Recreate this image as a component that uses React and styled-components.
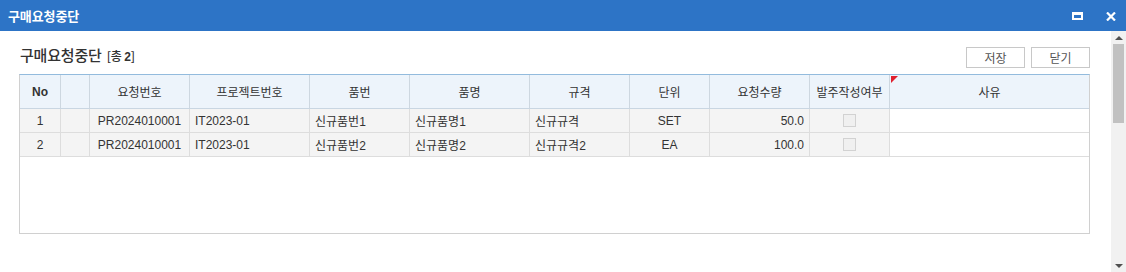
import React from 'react'
import styled, { createGlobalStyle } from 'styled-components';

const GlobalStyle = createGlobalStyle`
    html, body { margin: 0; padding: 0; background: #ffffff; }
    body { font-family: "Noto Sans CJK KR", "Liberation Sans", sans-serif; }
    * { box-sizing: border-box; }
`;

const columns = [
    { key: 'no', label: 'No', width: 41, align: 'center', bold: true },
    { key: 'blank', label: '', width: 29, align: 'center' },
    { key: 'reqNo', label: '요청번호', width: 100, align: 'center' },
    { key: 'project', label: '프로젝트번호', width: 120, align: 'left' },
    { key: 'partNo', label: '품번', width: 100, align: 'left' },
    { key: 'partName', label: '품명', width: 120, align: 'left' },
    { key: 'spec', label: '규격', width: 100, align: 'left' },
    { key: 'unit', label: '단위', width: 80, align: 'center' },
    { key: 'qty', label: '요청수량', width: 100, align: 'right' },
    { key: 'ordered', label: '발주작성여부', width: 80, align: 'center' },
    { key: 'reason', label: '사유', width: null, align: 'left', required: true, editable: true },
];

const rows = [
    { no: 1, blank: '', reqNo: 'PR2024010001', project: 'IT2023-01', partNo: '신규품번1', partName: '신규품명1', spec: '신규규격', unit: 'SET', qty: '50.0', ordered: false, reason: '' },
    { no: 2, blank: '', reqNo: 'PR2024010001', project: 'IT2023-01', partNo: '신규품번2', partName: '신규품명2', spec: '신규규격2', unit: 'EA', qty: '100.0', ordered: false, reason: '' },
];

const template = columns.map(c => c.width ? `${c.width}px` : '1fr').join(' ');

export default function App() {
    return (
        <>
            <GlobalStyle />
            <Window>
                <TitleBar>
                    <WindowTitle>구매요청중단</WindowTitle>
                    <TitleActions>
                        <MaximizeIcon />
                        <CloseIcon viewBox="0 0 10 9">
                            <path d="M1 0.5 L9 8.5 M9 0.5 L1 8.5" stroke="#fff" strokeWidth="2.2" />
                        </CloseIcon>
                    </TitleActions>
                </TitleBar>
                <Body>
                    <Main>
                        <Toolbar>
                            <Heading>
                                구매요청중단 <Count>[총 <b>2</b>]</Count>
                            </Heading>
                            <ButtonGroup>
                                <Button>저장</Button>
                                <Button>닫기</Button>
                            </ButtonGroup>
                        </Toolbar>
                        <Grid>
                            <GridRow $header>
                                {columns.map(c => (
                                    <HeaderCell key={c.key} $bold={c.bold}>
                                        {c.required && <RequiredMark />}
                                        {c.label}
                                    </HeaderCell>
                                ))}
                            </GridRow>
                            {rows.map(r => (
                                <GridRow key={r.no}>
                                    {columns.map(c => (
                                        <Cell key={c.key} $align={c.align} $editable={c.editable}>
                                            {c.key === 'ordered' ? <CheckBox /> : r[c.key]}
                                        </Cell>
                                    ))}
                                </GridRow>
                            ))}
                        </Grid>
                    </Main>
                    <ScrollBar>
                        <ScrollArrow $up />
                        <ScrollTrack>
                            <ScrollThumb />
                        </ScrollTrack>
                        <ScrollArrow />
                    </ScrollBar>
                </Body>
            </Window>
        </>
    )
}

const Window = styled.div`
    display: flex;
    flex-direction: column;
    width: 1126px;
    height: 272px;
    overflow: hidden;
    background: #ffffff;
`;

const TitleBar = styled.div`
    display: flex;
    justify-content: space-between;
    align-items: center;
    height: 31px;
    padding: 0 10px 0 8px;
    background-color: #2d74c6;
`;

const WindowTitle = styled.h1`
    margin: 0;
    font-size: 13px;
    font-weight: 700;
    color: #ffffff;
    letter-spacing: -0.1px;
`;

const TitleActions = styled.div`
    display: flex;
    align-items: center;
    gap: 23px;
    padding-top: 1px;
`;

const MaximizeIcon = styled.span`
    display: block;
    width: 11px;
    height: 8px;
    border: 2px solid #ffffff;
    border-top-width: 3px;
`;

const CloseIcon = styled.svg`
    display: block;
    width: 10px;
    height: 9px;
`;

const Body = styled.div`
    flex: 1;
    display: flex;
    min-height: 0;
`;

const Main = styled.div`
    flex: 1;
    padding: 12px 21px 0 19px;
`;

const Toolbar = styled.div`
    display: flex;
    justify-content: space-between;
    align-items: flex-end;
    height: 31px;
    padding-bottom: 6px;
`;

const Heading = styled.h2`
    margin: 0 0 0 1px;
    align-self: flex-start;
    padding-top: 1px;
    font-size: 15px;
    font-weight: 500;
    line-height: 22px;
    color: #333333;
    letter-spacing: -0.2px;
`;

const Count = styled.span`
    margin-left: 2px;
    font-size: 12px;
    font-weight: 500;
    color: #333333;

    b { font-family: "Liberation Sans", sans-serif; font-weight: 700; }
`;

const ButtonGroup = styled.div`
    display: flex;
    gap: 6px;
`;

const Button = styled.button`
    width: 59px;
    height: 21px;
    padding: 0;
    font-family: "Noto Sans CJK KR", sans-serif;
    font-size: 12px;
    color: #555555;
    background: #ffffff;
    border: 1px solid #c8c8c8;
    border-radius: 0;
    line-height: 19px;
`;

const Grid = styled.div`
    height: 160px;
    border: 1px solid #d0d0d0;
    border-top-color: #93bbdd;
    background: #ffffff;
`;

const GridRow = styled.div`
    display: grid;
    grid-template-columns: ${template};
    height: ${p => p.$header ? 34 : 24}px;
    background: ${p => p.$header ? '#edf4fb' : 'transparent'};
    border-bottom: 1px solid ${p => p.$header ? '#c9d6e2' : '#dddddd'};
`;

const HeaderCell = styled.div`
    position: relative;
    display: flex;
    align-items: center;
    justify-content: center;
    border-right: 1px solid #cdd7e0;
    font-family: ${p => p.$bold ? '"Liberation Sans", sans-serif' : '"Noto Sans CJK KR", sans-serif'};
    font-size: 12px;
    font-weight: ${p => p.$bold ? 700 : 400};
    color: #333333;

    &:last-child { border-right: none; }
`;

const RequiredMark = styled.span`
    position: absolute;
    top: 1px;
    left: 1px;
    width: 0;
    height: 0;
    border-top: 7px solid #e0202e;
    border-right: 7px solid transparent;
`;

const Cell = styled.div`
    display: flex;
    align-items: center;
    justify-content: ${p => p.$align === 'center' ? 'center' : p.$align === 'right' ? 'flex-end' : 'flex-start'};
    padding: 0 5px;
    border-right: 1px solid #dddddd;
    background: ${p => p.$editable ? '#ffffff' : '#f4f4f4'};
    font-family: "Liberation Sans", "Noto Sans CJK KR", sans-serif;
    font-size: 12px;
    color: #333333;
    white-space: nowrap;

    &:last-child { border-right: none; }
`;

const CheckBox = styled.span`
    display: block;
    width: 13px;
    height: 13px;
    border: 1px solid #d2d2d2;
    background: #f0f0f0;
`;

const ScrollBar = styled.div`
    display: flex;
    flex-direction: column;
    width: 15px;
    background: #f1f1f1;
`;

const ScrollArrow = styled.div`
    display: flex;
    align-items: center;
    justify-content: center;
    height: 13px;

    &::after {
        content: '';
        border-left: 4px solid transparent;
        border-right: 4px solid transparent;
        ${p => p.$up ? 'border-bottom: 4px solid #505050;' : 'border-top: 4px solid #505050;'}
    }
`;

const ScrollTrack = styled.div`
    flex: 1;
    padding: 0 2px;
`;

const ScrollThumb = styled.div`
    height: 79px;
    background: #c1c1c1;
`;
